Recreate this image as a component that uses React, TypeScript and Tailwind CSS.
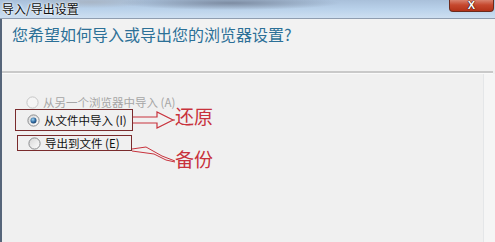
import React from "react";

function Radio({ checked = false, disabled = false }: { checked?: boolean; disabled?: boolean }) {
  return (
    <svg width="13" height="13" viewBox="0 0 13 13" className="shrink-0">
      <defs>
        <linearGradient id="rg" x1="0" y1="0" x2="1" y2="1">
          <stop offset="0" stopColor="#d6d6d6" />
          <stop offset="1" stopColor="#ffffff" />
        </linearGradient>
        <radialGradient id="dot" cx="0.4" cy="0.35" r="0.7">
          <stop offset="0" stopColor="#9fd3f0" />
          <stop offset="0.6" stopColor="#2f6aa0" />
          <stop offset="1" stopColor="#173c66" />
        </radialGradient>
      </defs>
      <circle
        cx="6.5"
        cy="6.5"
        r="5.6"
        fill={disabled ? "#f5f5f5" : "url(#rg)"}
        stroke={disabled ? "#c6c6c6" : "#8a8c8e"}
        strokeWidth="1"
      />
      {checked && <circle cx="6.5" cy="6.5" r="3" fill="url(#dot)" />}
    </svg>
  );
}

export default function App() {
  return (
    <div className="w-[495px] h-[242px] overflow-hidden flex flex-col bg-[#f0f0f0] font-['Noto_Sans_CJK_SC','Liberation_Sans',sans-serif]">
      {/* Title bar */}
      <div className="relative h-[19px] shrink-0 border-b border-[#8f9db0] bg-[radial-gradient(ellipse_110px_7px_at_230px_3px,#7d8ca2,transparent),radial-gradient(ellipse_60px_6px_at_90px_2px,#a9b6c6,transparent),linear-gradient(180deg,#a9c0da_0%,#b9d1ea_50%,#cddff1_100%)]">
        <div className="pl-[2px] pt-[2px] text-[12px] leading-[14px] text-[#111] [text-shadow:0_0_3px_#ffffff,0_0_2px_#ffffff]">
          导入/导出设置
        </div>
        <div className="absolute right-[1px] top-0 w-[45px] h-[12px] rounded-b-[4px] border border-t-0 border-[#6b2a1c] bg-[linear-gradient(180deg,#d9826e_0%,#c6482e_45%,#b33218_100%)] flex items-center justify-center">
          <span className="text-[11px] leading-none font-bold text-white font-['Liberation_Sans',sans-serif] [text-shadow:0_0_1px_#3a1208,0_0_1px_#3a1208,0_0_1px_#3a1208]">
            X
          </span>
        </div>
      </div>

      {/* Body */}
      <div className="flex-1 flex flex-col border-l-2 border-[#56657a]">
        {/* Header */}
        <div className="h-[52px] pl-[10px] pt-[6px] bg-[#f2f2f2]">
          <div className="text-[16px] leading-[18px] text-[#2c7097]">
            您希望如何导入或导出您的浏览器设置?
          </div>
        </div>
        <div className="h-[3px] border-t-2 border-b border-t-[#c9c9c9] border-b-[#fafafa] mr-[2px]" />

        <div className="flex-1 flex">
          {/* Options */}
          <div className="flex-1 flex flex-col pt-[21px] text-[11.5px] leading-[14px]">
            <div className="flex items-center gap-[4px] pl-[24px] h-[14px] text-[#a6a6a6]">
              <Radio disabled />
              <span>从另一个浏览器中导入 (A)</span>
            </div>

            <div className="flex items-center">
              <div className="ml-[13px] w-[118px] h-[22px] border-[1.5px] border-[#7a2b2d] flex items-center gap-[4px] pl-[11px] text-[#111]">
                <Radio checked />
                <span>从文件中导入 (I)</span>
              </div>
              <svg width="42" height="22" viewBox="0 0 42 22" className="shrink-0">
                <path
                  d="M0 8 H24 V3 L40 11 L24 19 V14 H0"
                  fill="none"
                  stroke="#c8323c"
                  strokeWidth="1.2"
                />
                <path d="M40 11 H42" stroke="#c8323c" strokeWidth="1.2" />
              </svg>
              <span className="text-[19px] leading-[20px] text-[#c8323c] -mt-[8px]">还原</span>
            </div>

            <div className="flex items-start mt-[4px]">
              <div className="ml-[15px] w-[115px] h-[16px] border-[1.5px] border-[#7a2b2d] flex items-center gap-[4px] pl-[10px] text-[#111]">
                <Radio />
                <span>导出到文件 (E)</span>
              </div>
              <svg width="43" height="30" viewBox="0 0 43 30" className="shrink-0">
                <polyline
                  points="0,14 14,12 30,21 43,26"
                  fill="none"
                  stroke="#c8323c"
                  strokeWidth="1"
                />
                <polyline
                  points="0,16 22,19 34,25 43,27"
                  fill="none"
                  stroke="#c8323c"
                  strokeWidth="1"
                />
              </svg>
              <span className="mt-[14px] text-[19px] leading-[20px] text-[#c8323c]">备份</span>
            </div>
          </div>
          <div className="w-[12px] border-l border-[#e4e6e8] bg-[#f5f5f5]" />
        </div>
      </div>
    </div>
  );
}
